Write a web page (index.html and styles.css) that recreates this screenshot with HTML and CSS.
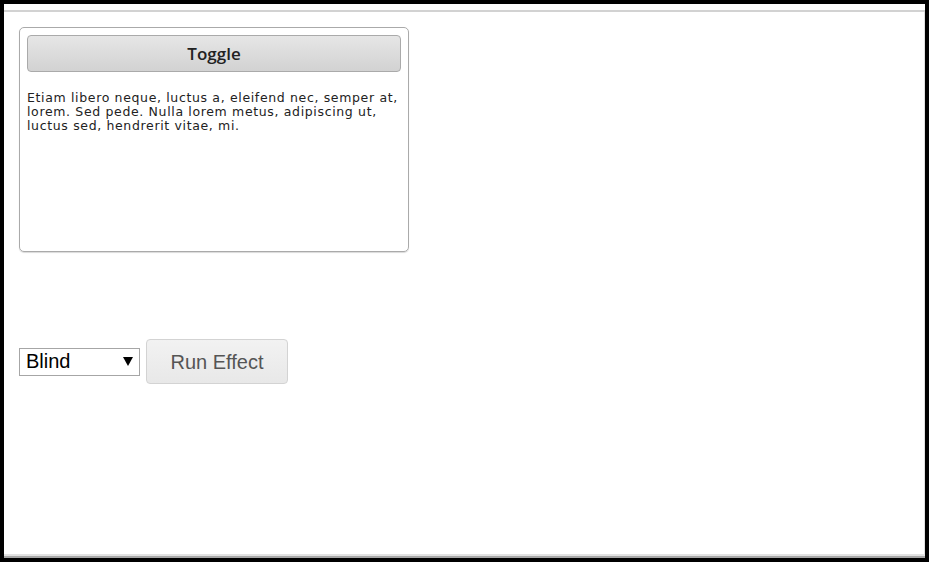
FILE: index.html
```html
<!DOCTYPE html>
<html>
<head>
<meta charset="utf-8">
<link rel="stylesheet" href="styles.css">
</head>
<body>
<div class="screen">
  <div class="topbar"></div>
  <div class="content">
    <div class="toggler">
      <button class="toggle-btn">Toggle</button>
      <p class="effect-text">Etiam libero neque, luctus a, eleifend nec, semper at, lorem. Sed pede. Nulla lorem metus, adipiscing ut, luctus sed, hendrerit vitae, mi.</p>
    </div>
    <div class="controls">
      <div class="select-box">
        <select class="effect-select">
          <option>Blind</option>
        </select>
        <svg class="arrow" width="10" height="9" viewBox="0 0 10 9"><path d="M0 0 H10 L5 9 Z" fill="#000"/></svg>
      </div>
      <button class="run-btn">Run Effect</button>
    </div>
  </div>
  <div class="bottombar"></div>
</div>
</body>
</html>
```

FILE: styles.css
```css
html, body {
  margin: 0;
  padding: 0;
  background: #000;
}
.screen {
  width: 929px;
  height: 562px;
  box-sizing: border-box;
  border-style: solid;
  border-color: #000;
  border-width: 4px 4px 4px 4px;
  background: #fff;
  display: flex;
  flex-direction: column;
}
.topbar {
  height: 6px;
  border-bottom: 2px solid #d2d2d2;
  flex: none;
}
.content {
  flex: 1;
  padding: 15px 0 0 15px;
  border-right: 1px solid #e0e0e0;
}
.bottombar {
  flex: none;
  height: 0;
  border-top: 2px solid #e2e2e2;
  border-bottom: 2px solid #a8a8a8;
}
.toggler {
  width: 390px;
  height: 225px;
  box-sizing: border-box;
  border: 1px solid #aaa;
  border-radius: 5px;
  padding: 7px;
  box-shadow: 0 1px 1px rgba(0,0,0,0.15);
}
.toggle-btn {
  display: block;
  width: 100%;
  height: 37px;
  border: 1px solid #aaa;
  border-radius: 4px;
  background: linear-gradient(#e6e6e6, #d2d2d2);
  font-family: "Open Sans", sans-serif;
  font-weight: 600;
  font-size: 17px;
  color: #222;
  padding: 0 0 1px 0;
}
.effect-text {
  margin: 19px 0 0 0;
  font-family: "DejaVu Sans", sans-serif;
  font-size: 12.5px;
  letter-spacing: 0.65px;
  line-height: 14px;
  color: #222;
}
.controls {
  margin-top: 87px;
  display: flex;
  align-items: center;
  gap: 6px;
}
.select-box {
  width: 121px;
  height: 28px;
  box-sizing: border-box;
  border: 1px solid #a6a6a6;
  display: flex;
  align-items: center;
  padding-right: 6px;
}
.effect-select {
  appearance: none;
  -webkit-appearance: none;
  border: none;
  background: transparent;
  flex: 1;
  font-family: "Liberation Sans", Arial, sans-serif;
  font-size: 20px;
  color: #000;
  padding: 0 0 2px 6px;
  outline: none;
}
.arrow {
  flex: none;
}
.run-btn {
  width: 142px;
  height: 45px;
  border: 1px solid #d3d3d3;
  border-radius: 4px;
  background: linear-gradient(#f2f2f2, #e8e8e8);
  font-family: "Liberation Sans", Arial, sans-serif;
  font-size: 20px;
  color: #555;
  padding: 2px 0 0 0;
}
```
